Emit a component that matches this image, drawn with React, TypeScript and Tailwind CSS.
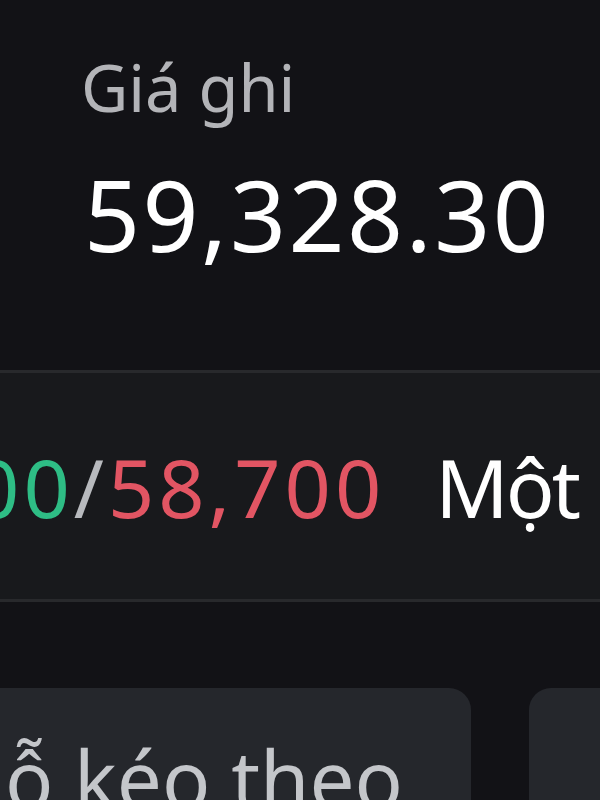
export default function App() {
    return (
        <div className="w-[600px] h-[800px] overflow-hidden bg-[#121216] flex flex-col" style={{ fontFamily: '"Noto Sans", "Open Sans", sans-serif' }}>
            <div className="h-[370px] shrink-0 flex flex-col pl-[81px] pt-[55px]">
                <span className="text-[65px] leading-none text-[#b3b4b8]">Giá ghi</span>
                <span className="mt-[45px] ml-[3px] text-[98px] leading-none text-white tracking-[2.5px]">59,328.30</span>
            </div>
            <div className="h-[232px] shrink-0 bg-[#18191c] border-y-[3px] border-[#28292c] flex items-center justify-end pr-[22px] overflow-hidden">
                <div className="flex items-baseline whitespace-nowrap text-[81px] leading-none">
                    <span className="text-[#2ebd85] tracking-[4px]">58,800</span>
                    <span className="text-[#b8babe] tracking-[4px]">/</span>
                    <span className="text-[#e25563] tracking-[4px]">58,700</span>
                    <span className="ml-[50px] text-white tracking-[-3px]">Một</span>
                </div>
            </div>
            <div className="flex gap-[58px] pt-[86px] -ml-[30px] shrink-0">
                <div className="w-[501px] h-[200px] shrink-0 rounded-[22px] bg-[#25272c] pt-[50px] overflow-hidden flex justify-end">
                    <div className="pr-[68px] whitespace-nowrap text-[80px] leading-none text-[#c4c6ca]">Cắt lỗ kéo theo</div>
                </div>
                <div className="w-[200px] h-[200px] shrink-0 rounded-[22px] bg-[#25272c]" />
            </div>
        </div>
    )
}
